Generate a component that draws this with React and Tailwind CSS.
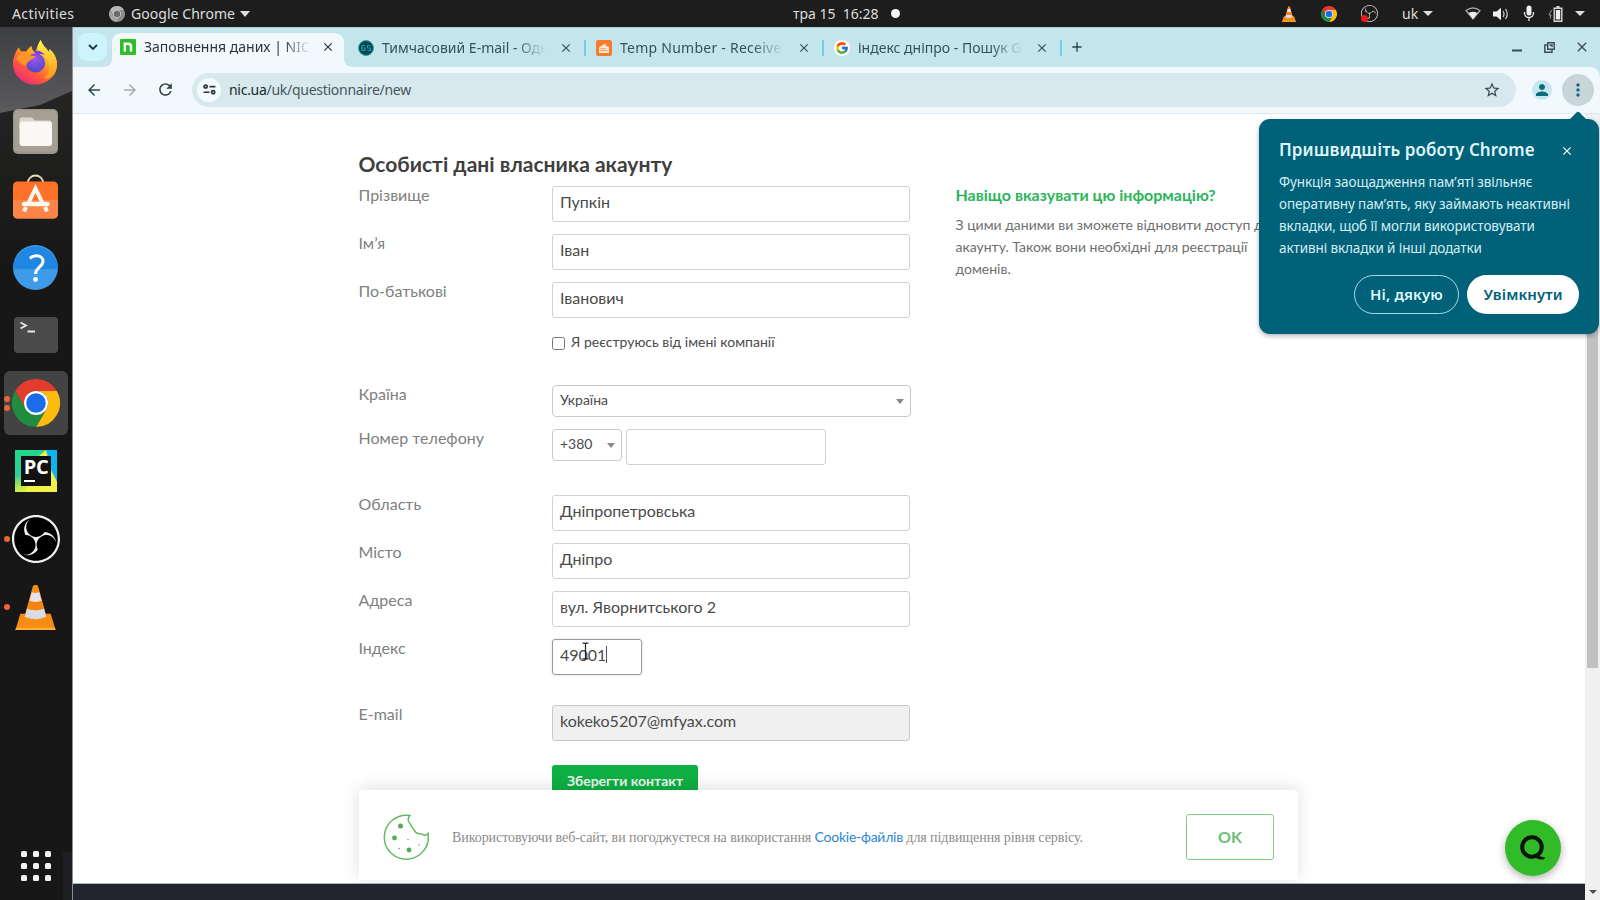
import { FcGoogle } from "react-icons/fc";
import { SiObsstudio } from "react-icons/si";
import { MdStarBorder, MdPerson, MdMoreVert, MdArrowBack, MdArrowForward, MdRefresh, MdClose, MdAdd } from "react-icons/md";

function Chrome({ className, gray = false }) {
  const c = gray ? ["#b9b9b9", "#8d8d8d", "#a5a5a5", "#6b6b6b", "#dcdcdc"] : ["#e33b2e", "#fbbc0d", "#1e8e3e", "#1a6cea", "#ffffff"];
  return (
    <svg viewBox="0 0 48 48" className={className}>
      <path fill={c[0]} d="M3.2 12A24 24 0 0 1 44.8 12H24A12 12 0 0 0 13.6 30Z" />
      <path fill={c[1]} d="M44.8 12A24 24 0 0 1 24 48L34.4 30A12 12 0 0 0 24 12Z" />
      <path fill={c[2]} d="M24 48A24 24 0 0 1 3.2 12L13.6 30A12 12 0 0 0 34.4 30Z" />
      <circle cx="24" cy="24" r="12" fill={c[4]} />
      <circle cx="24" cy="24" r="9.8" fill={c[3]} />
    </svg>
  );
}

function Vlc({ className }) {
  return (
    <svg viewBox="0 0 48 48" className={className}>
      <path d="M8.500 30.500h31L44.500 47H3.500z" fill="#f98b12" />
      <path d="M4.200 44.600h39.600l.7 2.400h-41z" fill="#ffb13c" />
      <path d="M12.500 34.500L21 3.200C21.400 1.400 22.600 1 24 1s2.600.4 3 2.200l8.500 31.300c0 3-4.500 5-11.500 5s-11.500-2-11.500-5z" fill="#f78d1a" />
      <path d="M20.200 8.400q3.800 1.400 7.600 0l2.400 9q-6.200 2.200-12.400 0z" fill="#e6e6ea" />
      <path d="M15.300 25q8.700 3.600 17.400 0l2.300 8.500q-11 4.800-22 0z" fill="#d9dce2" />
      <path d="M17.800 17.400q6.200 2.200 12.400 0l2.500 7.600q-8.700 3.600-17.400 0z" fill="#f58413" />
    </svg>
  );
}

function Firefox() {
  return (
    <svg viewBox="0 0 46 48" className="mr-[2px] mb-[3px] h-[47px] w-[46px]">
      <defs>
        <linearGradient id="ff-body" x1="0.8" y1="0.1" x2="0.2" y2="1">
          <stop offset="0" stopColor="#ffe13a" />
          <stop offset="0.35" stopColor="#ffa51f" />
          <stop offset="0.65" stopColor="#ff5a38" />
          <stop offset="1" stopColor="#f0208a" />
        </linearGradient>
        <linearGradient id="ff-tail" x1="0.5" y1="0" x2="0.6" y2="1">
          <stop offset="0" stopColor="#fff24a" />
          <stop offset="1" stopColor="#ff9a1c" />
        </linearGradient>
        <radialGradient id="ff-globe" cx="0.5" cy="0.3" r="0.75">
          <stop offset="0" stopColor="#9a55f0" />
          <stop offset="1" stopColor="#4a48c8" />
        </radialGradient>
      </defs>
      <path d="M6.500 9.500c.6 2 1.400 3.200 2.600 4.200 1.800-.4 3.500-.4 5.100.2C15.500 11.400 17.300 9.500 19.500 8.200c.2 3 1.300 5 3.400 6.300C25 12 25 6.500 29 2c1.200 5.500 5.500 8 8.300 12.200.5-.9.600-1.800.5-2.900C42.500 15.500 45.500 21 45.500 27 45.500 38.500 35.500 47.500 23 47.500S.5 38 .5 26.500C.5 19.500 3.500 13.500 6.500 9.500z" fill="url(#ff-body)" />
      <path d="M29 2c1.200 5.500 5.500 8 8.300 12.200.5-.9.600-1.800.5-2.900 7 6.200 9.300 14.700 6 22.700C41 40 36 42 32 41c5-3 7-9 5-15-1.500-5-6-8-9-11.500-3-3.800-2-8.500 1-12.500z" fill="url(#ff-tail)" />
      <circle cx="23.500" cy="25.500" r="9.800" fill="url(#ff-globe)" />
      <path d="M22 13.500c4.500-1.500 9 .3 11 4-3-1.500-5-1.300-6.500-.3-2-.4-3.500-1.500-4.500-3.700z" fill="#8b3fe0" />
      <path d="M4 21c3-5.500 9-8 12.500-4.500 1.500 1.500 4.500 1.800 7 2-1 3-4.500 3.300-6 4.700-1.500 1.300-3.500 2.300-3.500 5.300-4.500-1-8-4-10-7.500z" fill="#ff9426" />
    </svg>
  );
}

function Dot({ className = "" }) {
  return <span className={`h-[6px] w-[6px] rounded-full bg-[#ec6436] ${className}`} />;
}

function Tile({ children, dots = 0, active = false }) {
  return (
    <div className={`relative flex h-16 w-16 items-center justify-center rounded-md ${active ? "bg-[#434343]" : ""}`}>
      {dots > 0 && (
        <span className="absolute inset-y-0 left-0 flex flex-col justify-center gap-[3px]">
          <Dot />
          {dots > 1 && <Dot />}
        </span>
      )}
      {children}
    </div>
  );
}

function Dock() {
  return (
    <nav className="relative flex w-[73px] shrink-0 flex-col items-center justify-between border-r border-[#8f8f8f] bg-[#171717] pt-1">
      <svg viewBox="0 0 72 873" className="absolute inset-0 h-[873px] w-[72px]">
        <defs>
          <linearGradient id="sky" x1="0" y1="0" x2="0" y2="1">
            <stop offset="0" stopColor="#3e3f42" />
            <stop offset="1" stopColor="#5c5c5e" />
          </linearGradient>
          <linearGradient id="hill" x1="0" y1="0" x2="0" y2="1">
            <stop offset="0" stopColor="#242422" />
            <stop offset="1" stopColor="#171717" />
          </linearGradient>
        </defs>
        <rect width="72" height="90" fill="url(#sky)" />
        <path d="M0 86L40 78 72 64V240H0z" fill="url(#hill)" />
        <path d="M63 825h9v48h-9z" fill="#1e1e24" />
      </svg>
      <div className="relative flex flex-col gap-1">
        <Tile><Firefox /></Tile>
        <Tile>
          <svg viewBox="0 0 45 45" className="mr-[1px] h-[45px] w-[45px]">
            <rect width="45" height="45" rx="5" fill="#9a958a" />
            <rect x="1.500" y="1.500" width="42" height="41" rx="4" fill="#a5a094" />
            <path d="M6.500 11c0-1.700.8-2.500 2.500-2.500h9.500c1.500 0 2.500 3 4 3H36c1.700 0 2.500.8 2.500 2.500V20h-32z" fill="#d9d5cd" />
            <rect x="6.500" y="12.500" width="32.500" height="24.500" rx="3" fill="#faf8f5" />
          </svg>
        </Tile>
        <Tile>
          <svg viewBox="0 0 45 45" className="mr-[1px] mb-[6px] h-[45px] w-[45px]">
            <path d="M15 10V8.500a7.500 7 0 0 1 15 0V10" fill="none" stroke="#e9dcb8" strokeWidth="1.800" />
            <rect y="7.500" width="45" height="37" rx="4.500" fill="#ff7029" />
            <path d="M0 26h45v14a4.500 4.500 0 0 1-4.500 4.500h-36A4.500 4.500 0 0 1 0 40z" fill="#fb8546" />
            <path d="M15 30L22.500 14.500 30 30M13 33l-2 4.500M32 33l2 4.500" fill="none" stroke="#fff8f0" strokeWidth="4" />
            <path d="M11 30h23.500" stroke="#fff8f0" strokeWidth="4.500" strokeLinecap="round" />
          </svg>
        </Tile>
        <Tile>
          <svg viewBox="0 0 45 45" className="mr-[1px] h-[45px] w-[45px]">
            <circle cx="22.500" cy="22.500" r="22.500" fill="#3d9be8" />
            <path d="M0 24a22.500 22.500 0 0 1 45 0z" fill="#1f86e2" />
            <path d="M17 13.500c2-2.200 4.500-2.700 6.500-2.700 4 0 6.500 2.200 6.500 5.500 0 5.700-7.500 6.200-7.500 12.700" fill="none" stroke="#fff" strokeWidth="3" />
            <circle cx="22.500" cy="34.500" r="2.400" fill="#fff" />
          </svg>
        </Tile>
        <Tile>
          <svg viewBox="0 0 44 36" className="h-[36px] w-[44px]">
            <rect width="44" height="36" rx="4" fill="#4b4b4b" />
            <path d="M6.500 5.500L12 8.500 6.500 11.500M13.500 14.500h7.500" fill="none" stroke="#e8e8e8" strokeWidth="1.800" />
          </svg>
        </Tile>
        <Tile dots={2} active><Chrome className="h-[48px] w-[48px]" /></Tile>
        <Tile>
          <div className="flex h-[42px] w-[42px] items-center justify-center bg-[linear-gradient(160deg,#21d789_0%,#2bcf9a_45%,#c9ea48_70%,#fcf84a_100%)]">
            <svg viewBox="0 0 42 42" className="absolute h-[42px] w-[42px]">
              <path d="M31 0h11v32L36 20z" fill="#0bb5ee" />
              <path d="M24 6L31 0l5 20 6 12v10H10l2-6h24V6z" fill="#f2f04a" />
            </svg>
            <div className="relative flex h-[30px] w-[30px] items-start justify-center bg-[#121212] font-['Open_Sans',sans-serif] text-[20px] leading-[21px] font-bold tracking-[-0.5px] text-white">
              PC
              <span className="absolute bottom-[4px] left-[3px] h-[2px] w-[11px] bg-white" />
            </div>
          </div>
        </Tile>
        <Tile dots={1}>
          <div className="flex h-[48px] w-[48px] items-center justify-center rounded-full bg-black">
            <SiObsstudio className="h-[48px] w-[48px] text-[#efefef]" />
          </div>
        </Tile>
        <Tile dots={1}><Vlc className="mr-[1px] h-[47px] w-[47px]" /></Tile>
      </div>
      <div className="relative mr-[1px] mb-[19px] grid grid-cols-3 gap-[6px]">
        {Array.from({ length: 9 }, (_, i) => <span key={i} className="h-[6px] w-[6px] rounded-[1.500px] bg-[#f2f2f2]" />)}
      </div>
    </nav>
  );
}

function Caret({ className = "h-[5px] w-[10px]" }) {
  return <svg viewBox="0 0 10 6" preserveAspectRatio="none" className={className}><path d="M0 0h10L5 6z" fill="currentColor" /></svg>;
}

function TopBar() {
  return (
    <header className="relative flex h-[27px] shrink-0 items-center bg-[#1d1d1d] text-[14px] text-[#dedede]">
      <span className="w-[97px] pl-[12px] tracking-[0.4px]">Activities</span>
      <span className="flex items-center pl-[12px]">
        <Chrome gray className="mr-[6px] h-[16px] w-[16px]" />
        <span className="w-[105px] tracking-[0.05px]">Google Chrome</span>
        <Caret className="ml-[4px] h-[6px] w-[10px]" />
      </span>
      <div className="absolute inset-y-0 left-[793px] flex items-center whitespace-pre">
        <span className="w-[98px]">тра 15  16:28</span>
        <span className="h-[9px] w-[9px] rounded-full bg-[#f4f4f4]" />
      </div>
      <div className="ml-auto flex items-center pr-[15px]">
        <Vlc className="h-[16px] w-[16px]" />
        <Chrome className="ml-[24px] h-[16px] w-[16px]" />
        <span className="relative ml-[24px] flex h-[17px] w-[17px]">
          <SiObsstudio className="h-[17px] w-[17px] text-[#d8d8d8]" />
          <span className="absolute bottom-0 left-0 h-[7px] w-[7px] rounded-full bg-[#f01818]" />
        </span>
        <span className="ml-[24px] w-[19px]">uk</span>
        <Caret className="ml-[2px] h-[5px] w-[10px]" />
        <svg viewBox="0 0 16 13" className="ml-[32px] h-[13px] w-[16px]">
          <path d="M1 3.500Q8-1.500 15 3.500L8 12z" fill="none" stroke="#a5a5a5" strokeWidth="1.300" />
          <path d="M3.500 6q4.500-2.500 9 0L8 12z" fill="#f0f0f0" />
        </svg>
        <svg viewBox="0 0 16 14" className="ml-[12px] h-[14px] w-[16px]">
          <path d="M0 4.500h3.500L8 .8v12.400L3.500 9.500H0z" fill="#f0f0f0" />
          <path d="M10 4q2 3 0 6M12.500 2q3.500 5 0 10" fill="none" stroke="#c8c8c8" strokeWidth="1.300" />
        </svg>
        <svg viewBox="0 0 12 17" className="ml-[14px] h-[17px] w-[12px]">
          <rect x="3.500" y="0.500" width="5" height="10" rx="2.500" fill="#f0f0f0" />
          <path d="M1.500 7v1a4.500 4.500 0 0 0 9 0V7M6 12.500V16" fill="none" stroke="#d8d8d8" strokeWidth="1.400" />
        </svg>
        <svg viewBox="0 0 16 16" className="ml-[13px] h-[16px] w-[16px]">
          <path d="M3.500 4L1 9h2l-.8 3.500" fill="none" stroke="#999" strokeWidth="1" />
          <path d="M6.200 2.200h7.600v13H6.200zM8.500.8h3" fill="none" stroke="#d8d8d8" strokeWidth="1.400" />
          <rect x="7.800" y="4" width="4.400" height="9.500" fill="#f0f0f0" />
        </svg>
        <Caret className="ml-[11px] h-[5px] w-[10px]" />
      </div>
    </header>
  );
}

function Tab({ icon, title, tracking = "" }) {
  return (
    <div className="flex h-[39px] w-[238px] shrink-0 items-center text-[#35525b]">
      <span className="flex h-4 w-4 shrink-0 items-center justify-center">{icon}</span>
      <span className={`ml-[8px] w-[166px] overflow-hidden text-[14px] whitespace-nowrap [mask-image:linear-gradient(to_right,#000_80%,transparent_99%)] ${tracking}`}>{title}</span>
      <MdClose className="ml-[11px] h-[14px] w-[14px] shrink-0" />
      <span className="ml-[11px] h-4 w-[2px] bg-[#76cfe2]" />
    </div>
  );
}

function TabStrip() {
  return (
    <div className="flex h-[40px] shrink-0 items-start border-t border-[#a9cdd5] bg-[#c5e5ec] pl-[5px]">
      <button className="mt-[5px] flex h-[28px] w-[29px] items-center justify-center rounded-[9px] bg-[#cdf3fb]">
        <svg viewBox="0 0 10 6" className="h-[6px] w-[10px]"><path d="M1 1l4 4 4-4" fill="none" stroke="#1d3a42" strokeWidth="1.800" /></svg>
      </button>
      <div className="relative mt-[5px] ml-[5px] flex h-[34px] w-[232px] items-center rounded-t-[9px] bg-[#f1f9fd] pb-[7px] pl-[8px] text-[#2b3437]">
        <svg viewBox="0 0 8 8" className="absolute bottom-0 -left-2 h-2 w-2"><path d="M8 0v8H0a8 8 0 0 0 8-8z" fill="#f1f9fd" /></svg>
        <svg viewBox="0 0 8 8" className="absolute -right-2 bottom-0 h-2 w-2"><path d="M0 0v8h8a8 8 0 0 1-8-8z" fill="#f1f9fd" /></svg>
        <span className="flex h-4 w-4 items-center justify-center rounded-[1px] bg-[#2fbd2a]">
          <svg viewBox="0 0 10 10" className="h-[10px] w-[10px]"><path d="M1.800 9.500V1.800h3.400a2.800 2.800 0 0 1 2.800 2.800V9.500" fill="none" stroke="#fff" strokeWidth="2.400" /></svg>
        </span>
        <span className="ml-[8px] w-[168px] overflow-hidden text-[14px] whitespace-nowrap [mask-image:linear-gradient(to_right,#000_83%,transparent_99%)]">Заповнення даних | NIC.UA</span>
        <MdClose className="ml-[9px] h-[14px] w-[14px] shrink-0" />
      </div>
      <div className="flex pl-[14px]">
        <Tab
          title="Тимчасовий E-mail - Одноразова"
          icon={<svg viewBox="0 0 16 16" className="h-4 w-4"><circle cx="8" cy="8" r="7.500" fill="#0d4450" stroke="#18b8b0" /><path d="M7 5.500H4v5h3V8H5M12.500 5.500H9.500V8h3v2.500h-3" fill="none" stroke="#1f98a0" strokeWidth="1.200" /></svg>}
        />
        <Tab
          title="Temp Number - Receive SMS"
          tracking="tracking-[0.25px]"
          icon={<svg viewBox="0 0 16 16" className="h-4 w-4"><rect width="16" height="16" rx="2.500" fill="#f97b2a" /><path d="M3 7.500l4.500-3 2.500-1-.5 2L13 7v6H3z" fill="#ffe9d6" /><path d="M4.500 10.500h7M4.500 8.500h5" stroke="#f97b2a" strokeWidth=".7" /></svg>}
        />
        <Tab title="індекс дніпро - Пошук Google" icon={<span className="flex h-4 w-4 items-center justify-center rounded-full bg-white"><FcGoogle className="h-[14px] w-[14px]" /></span>} />
        <MdAdd className="mt-[11px] -ml-[3px] h-[16px] w-[16px] text-[#28444d]" />
      </div>
      <div className="ml-auto flex h-[38px] items-center pr-[10px] text-[#3b4c52]">
        <svg viewBox="0 0 10 10" className="h-[10px] w-[10px]"><path d="M0 8.500h10" stroke="currentColor" strokeWidth="2" /></svg>
        <svg viewBox="0 0 11 11" className="ml-[22px] h-[11px] w-[11px]"><path d="M3.700.8h6.500v6.500H3.700zM5.500 3h2.500v2M3.500 3H.8v7.200h7.200V8" fill="none" stroke="currentColor" strokeWidth="1.400" /></svg>
        <MdClose className="ml-[19px] h-[16px] w-[16px]" />
      </div>
    </div>
  );
}

function Toolbar() {
  return (
    <div className="flex h-[47px] shrink-0 items-center rounded-tr-[10px] border-b border-[#dde8ec] bg-[#f1f9fd] pb-px pl-[12px]">
      <MdArrowBack className="h-[18px] w-[18px] text-[#2c4a52]" />
      <MdArrowForward className="ml-[18px] h-[18px] w-[18px] text-[#a3adb1]" />
      <MdRefresh className="ml-[17px] h-[19px] w-[19px] text-[#2f4348]" />
      <div className="ml-[17px] flex h-[34px] w-[1324px] items-center rounded-full bg-[#d7e9ee] pl-[5px]">
        <span className="flex h-[24px] w-[24px] items-center justify-center rounded-full bg-[#f4fbfe]">
          <svg viewBox="0 0 14 12" className="h-[11px] w-[13px]" fill="none" stroke="#28383d" strokeWidth="1.900">
            <circle cx="2.800" cy="2.800" r="1.700" /><path d="M7 2.800h6.500M.5 9h6.500" /><circle cx="11" cy="9" r="1.700" />
          </svg>
        </span>
        <span className="ml-[8px] pb-px text-[14px] tracking-[-0.28px] text-[#47575c]"><span className="text-[#1c2a2f]">nic.ua</span>/uk/questionnaire/new</span>
        <MdStarBorder className="mr-[15px] ml-auto h-[18px] w-[18px] text-[#33474d]" />
      </div>
      <span className="ml-[16px] flex h-[20px] w-[20px] items-center justify-center rounded-full bg-[#c5e7ef]"><MdPerson className="h-[18px] w-[18px] text-[#0d6b80]" /></span>
      <span className="ml-[10px] flex h-[32px] w-[32px] items-center justify-center rounded-full bg-[#c8d6da]"><MdMoreVert className="h-[20px] w-[20px] text-[#12687c]" /></span>
    </div>
  );
}

const box = "flex h-[36px] items-center rounded-[3px] border pb-[5px] pl-[7px] text-[16px]";

function Row({ label, children, className = "" }) {
  return (
    <div className={`flex items-start ${className}`}>
      <label className="w-[193.500px] text-[16px] leading-[18px] text-[#808080]">{label}</label>
      {children}
    </div>
  );
}

function Field({ label, value, className = "" }) {
  return (
    <Row label={label} className={`mb-[12px] ${className}`}>
      <div className={`${box} w-[358px] border-[#d2d2d2] bg-white`}>{value}</div>
    </Row>
  );
}

function Form() {
  return (
    <main className="relative flex-1 overflow-hidden bg-white font-['Lato',sans-serif] text-[#4a4a4a]">
      <div className="flex pt-[36px] pl-[285.500px]">
        <div className="w-[597px] shrink-0">
          <h1 className="mb-[8px] text-[21px] leading-7 font-bold text-[#3f3f3f]">Особисті дані власника акаунту</h1>
          <Field label="Прізвище" value="Пупкін" />
          <Field label="Ім’я" value="Іван" />
          <Field label="По-батькові" value="Іванович" />
          <div className="flex h-[28px] pl-[193.500px] text-[14px] leading-[20px]">
            <span className="mt-[7px] h-[13px] w-[13px] rounded-[2.500px] border border-[#767676]" />
            <span className="mt-[2px] ml-[6px]">Я реєструюсь від імені компанії</span>
          </div>
          <Row label="Країна" className="mt-[27px] mb-[12px]">
            <div className="flex h-[32px] w-[359px] items-center justify-between rounded-[4px] border border-[#c9c9c9] pr-[6px] pl-[7px] text-[14px]"><span className="pb-[3px]">Україна</span><Caret className="h-[5px] w-[8px] text-[#888]" /></div>
          </Row>
          <Row label="Номер телефону" className="mb-[30px]">
            <div className="mr-[4px] flex h-[32px] w-[70px] items-center justify-between rounded-[4px] border border-[#c9c9c9] pr-[6px] pl-[7px] text-[14px]"><span className="pb-[3px]">+380</span><Caret className="h-[5px] w-[8px] text-[#888]" /></div>
            <div className={`${box} w-[200px] border-[#d2d2d2]`} />
          </Row>
          <Field label="Область" value="Дніпропетровська" />
          <Field label="Місто" value="Дніпро" />
          <Field label="Адреса" value="вул. Яворнитського 2" />
          <Row label="Індекс" className="mb-[30px]">
            <div className={`${box} relative w-[90px] border-[#999] shadow-[0_0_3px_rgba(0,0,0,0.15)]`}>
              49001
              <span className="h-[17px] w-px bg-[#555]" />
              <svg viewBox="0 0 7 17" className="absolute top-[2px] left-[29px] h-[18px] w-[7px]"><path d="M.5.700h2.200l.8.800.8-.8h2.200M3.500 1.500v14M.5 16.300h2.200l.8-.8.8.8h2.200" fill="none" stroke="#222" strokeWidth="1.200" /></svg>
            </div>
          </Row>
          <Row label="E-mail" className="mb-[24px]">
            <div className={`${box} w-[358px] border-[#c9c9c9] bg-[#f0f0f0]`}>kokeko5207@mfyax.com</div>
          </Row>
          <button className="ml-[193.500px] flex h-[34px] w-[146px] items-center justify-center rounded-[3px] bg-[#0eb043] pb-[4px] text-[14px] font-bold text-[#ecf9f0]">Зберегти контакт</button>
        </div>
        <aside className="pt-[35px]">
          <h2 className="mb-[9px] text-[16px] leading-[20px] font-bold text-[#2bb55a]">Навіщо вказувати цю інформацію?</h2>
          <p className="text-[14px] leading-[22px] whitespace-nowrap text-[#6e6e6e]">З цими даними ви зможете відновити доступ до<br />акаунту. Також вони необхідні для реєстрації<br />доменів.</p>
        </aside>
      </div>
      <div className="absolute bottom-[3px] left-[286px] flex h-[90px] w-[939px] items-center rounded-t-[3px] bg-white pt-[3px] pl-[24px] shadow-[0_-2px_18px_rgba(0,0,0,0.13)]">
        <svg viewBox="0 0 46 46" className="h-[46px] w-[46px]" fill="none" stroke="#62bb66" strokeWidth="1.500">
          <path d="M27 1.500A22 22 0 1 0 45 19.500c-1.500 1.800-4 2.500-5.500.8-1.800-1.300-3.500 0-5.800-1.300-2.200-1.300-2-3-3.700-4.500-2-1.700-1.500-3.500-3.200-5.200C24.500 6.500 25 3.500 27 1.500z" />
          <g fill="#4fae54" stroke="none"><circle cx="17.500" cy="12" r="2.500" /><circle cx="11.500" cy="24" r="2.400" /><circle cx="26" cy="36" r="2.400" /><circle cx="25" cy="25.500" r=".7" /><circle cx="16" cy="34.500" r=".8" /><circle cx="36" cy="31" r=".8" /></g>
        </svg>
        <p className="ml-[23px] font-['Liberation_Serif',serif] text-[14px] tracking-[-0.07px] whitespace-nowrap text-[#8b8b8b]">Використовуючи веб-сайт, ви погоджуєтеся на використання <span className="font-['Lato',sans-serif] tracking-[-0.25px] text-[#2b87d3]">Cookie-файлів</span> для підвищення рівня сервісу.</p>
        <button className="mr-[24px] ml-auto flex h-[46px] w-[88px] items-center justify-center rounded-[3px] border border-[#7fd083] text-[16px] font-bold text-[#6cc070]">OK</button>
      </div>
      <div className="absolute right-[24px] bottom-[7px] flex h-[56px] w-[56px] items-center justify-center rounded-full bg-[#32bb28] shadow-[0_3px_8px_rgba(0,0,0,0.3)]">
        <svg viewBox="0 0 26 26" className="h-[26px] w-[26px]"><circle cx="12" cy="12" r="9.800" fill="none" stroke="#06140a" strokeWidth="4" /><path d="M17 18c1.500 3 4 4.300 8 4.300l-1 2c-5 .8-9-1-11-4.300z" fill="#06140a" /></svg>
      </div>
    </main>
  );
}

function Popover() {
  return (
    <div className="absolute top-[119px] left-[1259px] h-[215px] w-[340px] rounded-[11px] bg-[#006178] px-[20px] pt-[19px] text-white shadow-[0_2px_5px_rgba(0,0,0,0.3)]">
      <svg viewBox="0 0 18 9" className="absolute -top-[8px] right-[12px] h-[9px] w-[18px]"><path d="M0 9l7.500-7.500q1.500-1.500 3 0L18 9z" fill="#006178" /></svg>
      <div className="flex items-center justify-between">
        <h3 className="text-[17px] leading-[24px] font-semibold tracking-[0.05px] text-[#dff6fb]">Пришвидшіть роботу Chrome</h3>
        <MdClose className="mt-px mr-[5px] h-[14px] w-[14px]" />
      </div>
      <p className="mt-[9px] text-[13.500px] leading-[22px] tracking-[-0.1px] whitespace-nowrap text-[#d5eef4]">Функція заощадження пам’яті звільняє<br />оперативну пам’ять, яку займають неактивні<br />вкладки, щоб її могли використовувати<br />активні вкладки й інші додатки</p>
      <div className="mt-[16px] flex justify-end gap-[8px] text-[15px] font-semibold">
        <button className="h-[39px] w-[105px] rounded-full border border-[#a9dbe6] tracking-[0.15px] text-[#dff6fb]">Ні, дякую</button>
        <button className="h-[39px] w-[112px] rounded-full bg-white tracking-[0.1px] text-[#006178]">Увімкнути</button>
      </div>
    </div>
  );
}

export default function App() {
  return (
    <div className="relative flex h-[900px] w-[1600px] flex-col overflow-hidden bg-[#171717] font-['Noto_Sans',sans-serif]">
      <TopBar />
      <div className="flex min-h-0 flex-1">
        <Dock />
        <div className="flex min-w-0 flex-1 flex-col bg-[#c5e5ec]">
          <TabStrip />
          <Toolbar />
          <div className="flex min-h-0 flex-1">
            <div className="flex flex-1 flex-col">
              <Form />
              <div className="h-[17px] shrink-0 border-t border-[#a3b7c2] bg-[#22242f]" />
            </div>
            <div className="flex w-[15px] flex-col items-center bg-[#f0f0f0] pt-[16px] pb-[6px]">
              <div className="h-[538px] w-[11px] bg-[#c1c1c1]" />
              <Caret className="mt-auto h-[4px] w-[8px] text-[#505050]" />
            </div>
          </div>
        </div>
      </div>
      <Popover />
    </div>
  );
}
